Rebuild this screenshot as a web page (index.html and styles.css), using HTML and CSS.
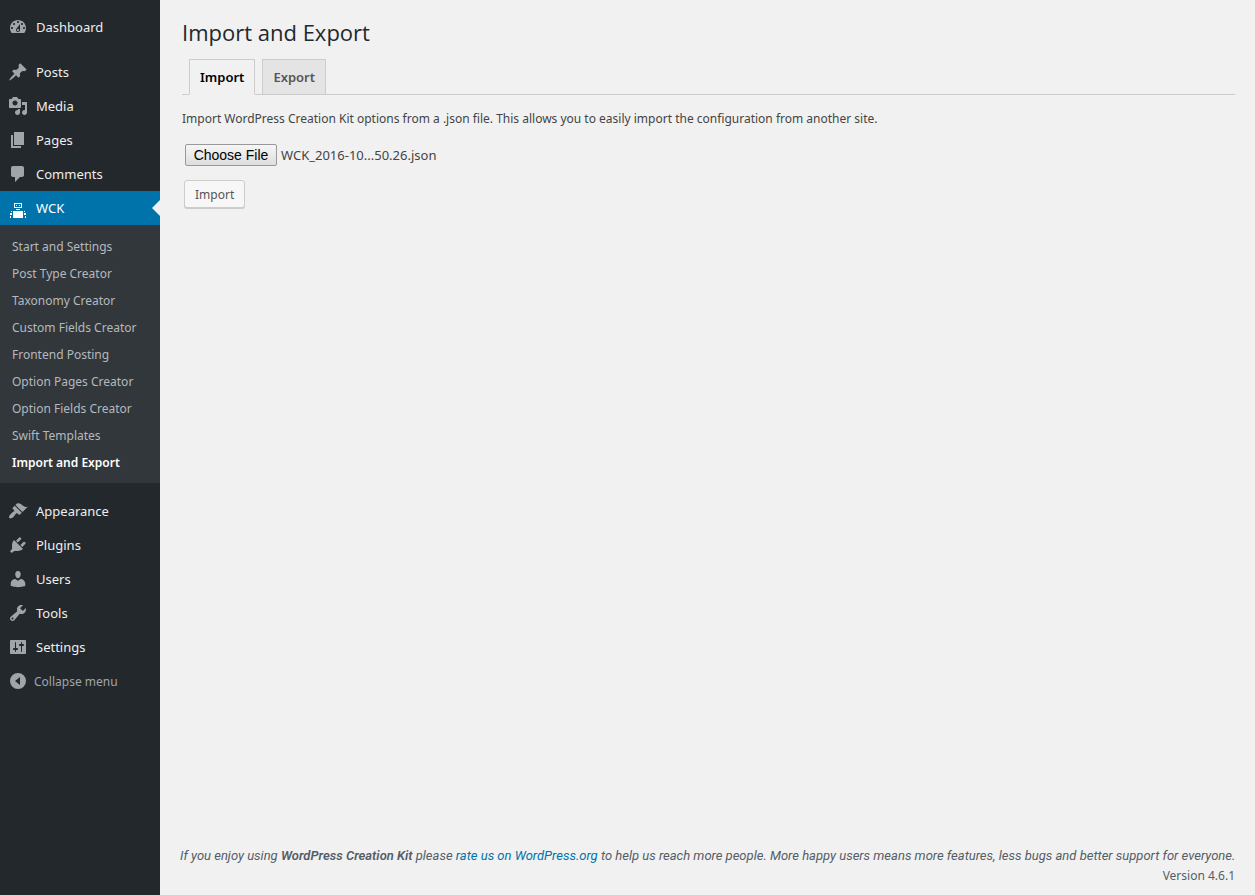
FILE: index.html
```html
<!DOCTYPE html>
<html lang="en">
<head>
<meta charset="utf-8">
<title>Import and Export</title>
<link rel="stylesheet" href="styles.css">
</head>
<body>
<div class="admin">
  <nav class="menu" aria-label="Main menu">
    <ul class="menu-list">
      <li><a class="menu-item" href="#"><svg class="icon" viewBox="0 0 20 20"><path d="M3.76 16h12.48c1.1-1.37 1.76-3.11 1.76-5 0-4.42-3.58-8-8-8s-8 3.58-8 8c0 1.89.66 3.63 1.76 5zM10 4c.55 0 1 .45 1 1s-.45 1-1 1-1-.45-1-1 .45-1 1-1zM6 6c.55 0 1 .45 1 1s-.45 1-1 1-1-.45-1-1 .45-1 1-1zm8 0c.55 0 1 .45 1 1s-.45 1-1 1-1-.45-1-1 .45-1 1-1zm-5.37 5.55L12 7v6c0 1.1-.9 2-2 2s-2-.9-2-2c0-.57.24-1.08.63-1.45zM4 10c.55 0 1 .45 1 1s-.45 1-1 1-1-.45-1-1 .45-1 1-1zm12 0c.55 0 1 .45 1 1s-.45 1-1 1-1-.45-1-1 .45-1 1-1zm-5 3c0-.55-.45-1-1-1s-1 .45-1 1 .45 1 1 1 1-.45 1-1z"/></svg>Dashboard</a></li>
      <li class="group-start"><a class="menu-item" href="#"><svg class="icon" viewBox="0 0 20 20"><path d="M10.44 3.02l1.82-1.82 6.36 6.35-1.83 1.82c-1.05-.68-2.48-.57-3.41.36l-.75.75c-.92.93-1.04 2.35-.35 3.41l-1.83 1.82-2.41-2.41-2.8 2.79c-.42.42-3.38 2.71-3.8 2.29s1.86-3.39 2.28-3.81l2.79-2.79L4.1 9.36l1.83-1.82c1.05.69 2.48.57 3.4-.36l.75-.75c.93-.92 1.05-2.35.36-3.41z"/></svg>Posts</a></li>
      <li><a class="menu-item" href="#"><svg class="icon" viewBox="0 0 20 20"><path d="M13 11V4c0-.55-.45-1-1-1h-1.67L9 1H5L3.67 3H2c-.55 0-1 .45-1 1v7c0 .55.45 1 1 1h10c.55 0 1-.45 1-1zM7 4.5c1.38 0 2.5 1.12 2.5 2.5S8.38 9.5 7 9.5 4.5 8.38 4.5 7 5.62 4.5 7 4.5zM14 6h5v10.5c0 1.38-1.12 2.5-2.5 2.5S14 17.88 14 16.5s1.12-2.5 2.5-2.5c.17 0 .34.02.5.05V9h-3V6zm-4 8.05V13h2v3.5c0 1.38-1.12 2.5-2.5 2.5S7 17.88 7 16.5 8.12 14 9.5 14c.17 0 .34.02.5.05z"/></svg>Media</a></li>
      <li><a class="menu-item" href="#"><svg class="icon" viewBox="0 0 20 20"><path d="M6 15V2h10v13H6zm-1 1h8v2H3V5h2v11z"/></svg>Pages</a></li>
      <li><a class="menu-item" href="#"><svg class="icon" viewBox="0 0 20 20"><path d="M5 2h9c1.100 0 2 .9 2 2v7c0 1.100-.9 2-2 2h-2l-5 5v-5H5c-1.100 0-2-.9-2-2V4c0-1.100.9-2 2-2z"/></svg>Comments</a></li>
      <li>
        <a class="menu-item current" href="#"><svg class="icon" viewBox="0 0 20 20"><path fill-rule="evenodd" d="M6 5h8v5H6zM7 6v3h6V6zM8 7h1v1H8zM11 7h1v1h-1zM8 11h4v1H8zM5 13h10v7H5zM3 13h1v1H3zM2 15h2v2H2zM2 18h1v2H2zM16 13h1v1h-1zM16 15h2v2h-2zM17 18h1v2h-1z"/></svg>WCK</a>
        <ul class="submenu">
          <li><a href="#">Start and Settings</a></li>
          <li><a href="#">Post Type Creator</a></li>
          <li><a href="#">Taxonomy Creator</a></li>
          <li><a href="#">Custom Fields Creator</a></li>
          <li><a href="#">Frontend Posting</a></li>
          <li><a href="#">Option Pages Creator</a></li>
          <li><a href="#">Option Fields Creator</a></li>
          <li><a href="#">Swift Templates</a></li>
          <li><a class="active" href="#" aria-current="page">Import and Export</a></li>
        </ul>
      </li>
      <li class="group-start"><a class="menu-item" href="#"><svg class="icon" viewBox="0 0 20 20"><path d="M14.48 11.06L7.41 3.99l1.5-1.5c.5-.56 2.3-.47 3.51.32 1.21.8 1.43 1.28 2.91 2.1 1.18.64 2.45 1.26 4.45.85zm-.71.71L6.7 4.7 4.93 6.47c-.39.39-.39 1.02 0 1.41l1.06 1.06c.39.39.39 1.03 0 1.42-.6.6-1.43 1.11-2.21 1.69-.35.26-.7.53-1.01.84C1.43 14.23.4 16.08 1.4 17.07c.99 1 2.84-.03 4.18-1.36.31-.31.58-.66.85-1.02.57-.78 1.08-1.61 1.69-2.21.39-.39 1.02-.39 1.41 0l1.06 1.06c.39.39 1.02.39 1.41 0z"/></svg>Appearance</a></li>
      <li><a class="menu-item" href="#"><svg class="icon" viewBox="0 0 20 20"><path d="M13.11 4.36L9.87 7.6 8 5.73l3.24-3.24c.35-.34 1.05-.2 1.56.32.52.51.66 1.21.31 1.55zm-8 1.77l.91-1.12 9.01 9.01-1.19.84c-.71.71-2.63 1.16-3.82 1.16H6.14L4.9 17.26c-.59.59-1.54.59-2.12 0-.59-.58-.59-1.53 0-2.12l1.24-1.24v-3.88c0-1.13.4-3.19 1.09-3.89zm7.26 3.97l3.24-3.24c.34-.35 1.04-.21 1.55.31.52.51.66 1.21.31 1.55l-3.24 3.25z"/></svg>Plugins</a></li>
      <li><a class="menu-item" href="#"><svg class="icon" viewBox="0 0 20 20"><path d="M10 9.25c-2.27 0-2.73-3.44-2.73-3.44C7 4.02 7.82 2 9.97 2c2.16 0 2.98 2.02 2.71 3.81 0 0-.41 3.44-2.68 3.44zm0 2.57L12.72 10c2.39 0 4.52 2.33 4.52 4.53v2.49s-3.65 1.13-7.24 1.13c-3.65 0-7.24-1.13-7.24-1.13v-2.49c0-2.25 1.94-4.48 4.47-4.48z"/></svg>Users</a></li>
      <li><a class="menu-item" href="#"><svg class="icon" viewBox="0 0 20 20"><path d="M16.68 9.77c-1.34 1.34-3.3 1.67-4.95.99l-5.41 6.52c-.99.99-2.59.99-3.58 0s-.99-2.59 0-3.57l6.52-5.42c-.68-1.65-.35-3.61.99-4.95 1.28-1.28 3.12-1.62 4.72-1.06l-2.89 2.89 2.82 2.82 2.86-2.87c.53 1.58.18 3.39-1.08 4.65zM3.81 16.21c.4.39 1.04.39 1.43 0 .4-.4.4-1.04 0-1.43-.39-.4-1.03-.4-1.43 0-.39.39-.39 1.03 0 1.43z"/></svg>Tools</a></li>
      <li><a class="menu-item" href="#"><svg class="icon" viewBox="0 0 20 20"><path d="M18 16V4c0-.55-.45-1-1-1H3c-.55 0-1 .45-1 1v12c0 .55.45 1 1 1h14c.55 0 1-.45 1-1zM8 11h1c.55 0 1 .45 1 1s-.45 1-1 1H8v1.500c0 .28-.22.5-.5.5s-.5-.22-.5-.5V13H6c-.55 0-1-.45-1-1s.45-1 1-1h1V5.500c0-.28.22-.5.5-.5s.5.22.5.5V11zm5-2h-1c-.55 0-1-.45-1-1s.45-1 1-1h1V5.500c0-.28.22-.5.5-.5s.5.22.5.5V7h1c.55 0 1 .45 1 1s-.45 1-1 1h-1v5.500c0 .28-.22.5-.5.5s-.5-.22-.5-.5V9z"/></svg>Settings</a></li>
      <li><button class="menu-item collapse" type="button"><svg class="icon" viewBox="0 0 20 20"><path fill-rule="evenodd" d="M10 2a8 8 0 1 0 0 16 8 8 0 0 0 0-16zM12 6v8l-5-4z"/></svg>Collapse menu</button></li>
    </ul>
  </nav>
  <div class="content">
    <main class="page">
      <h1 class="title">Import and Export</h1>
      <div class="tabs">
        <a class="tab selected" href="#">Import</a>
        <a class="tab" href="#">Export</a>
      </div>
      <p class="intro">Import WordPress Creation Kit options from a .json file. This allows you to easily import the configuration from another site.</p>
      <form class="import-form">
        <div class="file-row">
          <input class="file" id="file" type="file" accept=".json" aria-label="Choose File" aria-describedby="file-name">
          <label class="file-name" id="file-name" for="file">WCK_2016-10...50.26.json</label>
        </div>
        <button class="submit" type="submit">Import</button>
      </form>
    </main>
    <footer class="footer">
      <p class="thanks">If you enjoy using <strong>WordPress Creation Kit</strong> please <a href="#">rate us on WordPress.org</a> to help us reach more people. More happy users means more features, less bugs and better support for everyone.</p>
      <p class="version">Version 4.6.1</p>
    </footer>
  </div>
</div>
</body>
</html>
```
FILE: styles.css
```css
* { box-sizing: border-box; }

body {
  margin: 0;
  background: #f1f1f1;
  color: #444;
  font: 12px/20px "Noto Sans", "Open Sans", sans-serif;
}

ul, p, h1 { margin: 0; padding: 0; }
ul { list-style: none; }
a { color: #0073aa; text-decoration: none; }

.admin { display: flex; min-height: 100vh; }

.menu { flex: none; width: 160px; padding-top: 10px; background: #23282d; }
.group-start { margin-top: 11px; }

.menu-item {
  display: flex;
  align-items: center;
  gap: 8px;
  position: relative;
  width: 100%;
  height: 34px;
  padding: 0 8px;
  color: #eee;
  font-size: 13px;
}
.icon { flex: none; width: 20px; height: 20px; fill: #a0a5aa; }

.menu-item.current { background: #0073aa; color: #fff; }
.menu-item.current .icon { fill: #fff; }
.menu-item.current::after {
  content: "";
  position: absolute;
  top: 9px;
  right: 0;
  border: 8px solid transparent;
  border-left-width: 0;
  border-right-color: #f1f1f1;
}

.menu-item.collapse {
  gap: 6px;
  border: 0;
  background: none;
  color: #a0a5aa;
  font-family: inherit;
  font-size: 12px;
}

.submenu { padding: 8px 0 7px; background: #32373c; }
.submenu a { display: block; padding: 0 12px; color: #b4b9be; line-height: 27px; }
.submenu .active { color: #fff; font-weight: 600; }

.content { flex: 1; display: flex; flex-direction: column; padding: 0 20px 0 22px; }
.page { flex: 1; }

.title {
  padding-top: 17px;
  color: #23282d;
  font-family: "Open Sans", "Noto Sans", sans-serif;
  font-size: 22px;
  font-weight: 400;
  line-height: 30px;
}

.tabs { display: flex; gap: 7px; margin-top: 12px; padding-left: 7px; border-bottom: 1px solid #ccc; }
.tab {
  padding: 5px 10px;
  border: 1px solid #ccc;
  border-bottom: 0;
  background: #e4e4e4;
  color: #555;
  font-size: 13px;
  font-weight: 600;
  line-height: 24px;
}
.tab.selected { margin-bottom: -1px; border-bottom: 1px solid #f1f1f1; background: #f1f1f1; color: #000; }

.intro { margin-top: 14px; }

.import-form { display: flex; flex-direction: column; align-items: flex-start; gap: 14px; margin-top: 15px; }
.file-row { display: flex; align-items: center; gap: 4px; padding-left: 3px; }
.file { width: 92px; height: 22px; color: transparent; font-size: 14px; overflow: hidden; }
.file::file-selector-button {
  width: 92px;
  height: 22px;
  margin: 0;
  padding: 0;
  border: 1px solid #999;
  border-radius: 2px;
  background: linear-gradient(#f6f6f6, #dedede);
  color: #000;
  font: 14px/20px "Liberation Sans", Arial, sans-serif;
}
.file-name { font-size: 13px; }
.submit {
  height: 28px;
  margin-left: 2px;
  padding: 1px 10px 0;
  border: 1px solid #ccc;
  border-radius: 3px;
  background: #f7f7f7;
  box-shadow: 0 1px 0 #ccc;
  color: #555;
  font: inherit;
}

.footer { margin-left: -2px; padding-bottom: 9px; color: #555d66; text-align: right; }
.thanks { margin-right: -16px; font-family: Roboto, "Noto Sans", sans-serif; font-size: 13px; font-style: italic; text-align: left; }
.thanks strong { font-weight: 600; }
```
